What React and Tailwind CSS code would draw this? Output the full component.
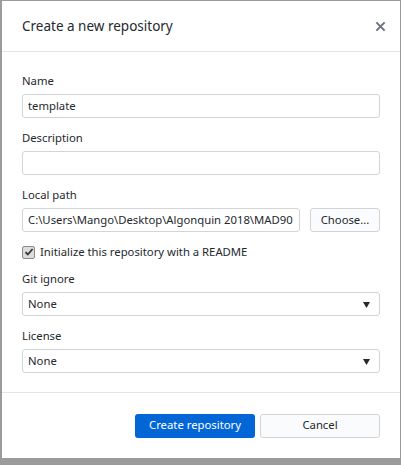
import React from "react"

const font = { fontFamily: '"Noto Sans", "Open Sans", sans-serif' }

function Field({ label, children }) {
  return (
    <div className="flex flex-col">
      <label className="text-[11.3px] leading-[14px] text-[#24292e] mb-[6px]">{label}</label>
      {children}
    </div>
  )
}

function TextBox({ value, className = "" }) {
  return (
    <div
      className={`h-[24px] border border-[#d1d5da] rounded-[3px] bg-white px-[5px] flex items-center text-[11.3px] text-[#24292e] overflow-hidden whitespace-nowrap ${className}`}
    >
      {value}
    </div>
  )
}

function Select({ value }) {
  return (
    <div className="h-[24px] border border-[#d1d5da] rounded-[3px] bg-white pl-[5px] pr-[9px] flex items-center justify-between text-[11.3px] text-[#24292e]">
      <span>{value}</span>
      <svg width="7" height="7" viewBox="0 0 7 7">
        <path d="M0 1h7L3.5 7z" fill="#24292e" />
      </svg>
    </div>
  )
}

export default function App() {
  return (
    <div className="w-[401px] h-[465px] bg-[#9b9b9b] pt-[1px] pl-[2px]" style={font}>
      <div className="w-[398px] h-[457px] bg-white flex flex-col">
        <div className="h-[51px] shrink-0 border-b border-[#e1e4e8] flex items-center justify-between pl-[20px] pr-[14px]">
          <span className="text-[13.5px] text-[#24292e]">Create a new repository</span>
          <svg width="11" height="11" viewBox="0 0 12 12">
            <path d="M1.5 1.5l9 9M10.5 1.5l-9 9" stroke="#6a737d" strokeWidth="2.2" />
          </svg>
        </div>

        <div className="px-[20px] pt-[22px] flex flex-col gap-[13px] flex-1">
          <Field label="Name">
            <TextBox value="template" />
          </Field>
          <Field label="Description">
            <TextBox value="" />
          </Field>
          <Field label="Local path">
            <div className="flex gap-[10px]">
              <TextBox value={"C:\\Users\\Mango\\Desktop\\Algonquin 2018\\MAD90"} className="flex-1 min-w-0" />
              <div className="w-[70px] h-[24px] border border-[#d1d5da] rounded-[3px] bg-[#fafbfc] flex items-center justify-center text-[11.3px] text-[#24292e]">
                Choose...
              </div>
            </div>
          </Field>
          <div className="flex items-center gap-[5px] h-[14px]">
            <div className="w-[13px] h-[13px] border border-[#8a8a8a] bg-[#dcdcdc] rounded-[2px] flex items-center justify-center">
              <svg width="10" height="10" viewBox="0 0 10 10">
                <path d="M1.5 5.2l2.3 2.3L8.6 2" stroke="#333" strokeWidth="1.8" fill="none" />
              </svg>
            </div>
            <span className="text-[11.3px] text-[#24292e]">Initialize this repository with a README</span>
          </div>
          <Field label="Git ignore">
            <Select value="None" />
          </Field>
          <Field label="License">
            <Select value="None" />
          </Field>
        </div>

        <div className="h-[66px] shrink-0 border-t border-[#e1e4e8] flex items-center justify-end gap-[5px] pr-[20px]">
          <div className="w-[120px] h-[24px] rounded-[3px] bg-[#0366d6] text-white text-[11.3px] flex items-center justify-center">
            Create repository
          </div>
          <div className="w-[120px] h-[24px] rounded-[3px] border border-[#d1d5da] bg-[#fafbfc] text-[#24292e] text-[11.3px] flex items-center justify-center">
            Cancel
          </div>
        </div>
      </div>
    </div>
  )
}
